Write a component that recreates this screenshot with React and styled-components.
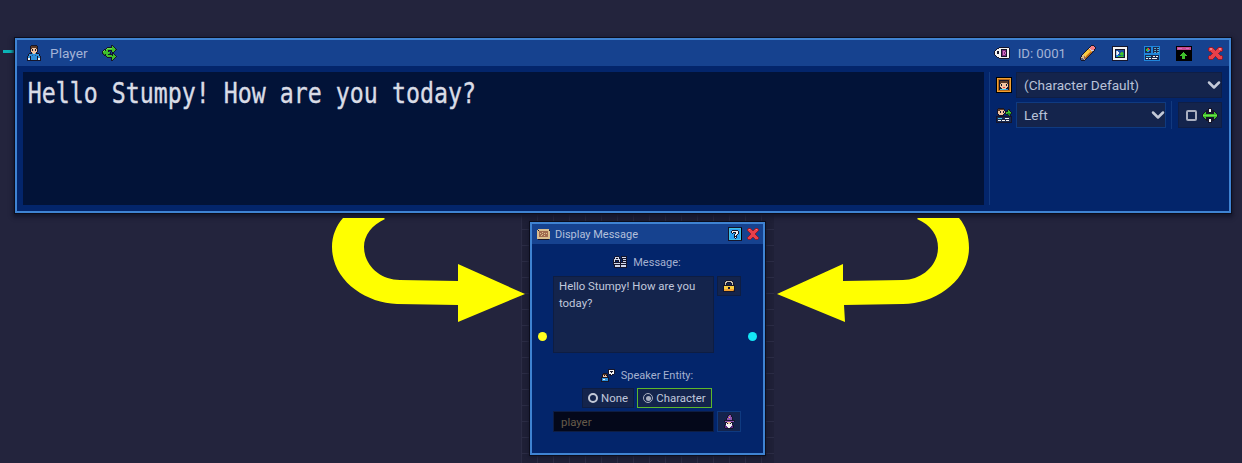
import React from 'react';
import styled, { createGlobalStyle } from 'styled-components';
import { ChevronDown } from 'lucide-react';

const GlobalStyle = createGlobalStyle`
  html, body {
    margin: 0;
    height: 100%;
    background: #23243d;
    overflow: hidden;
  }
  #root {
    height: 463px;
  }
`;

const Page = styled.div`
  position: relative;
  width: 1242px;
  height: 463px;
  padding: 38px 0 0 15px;
  box-sizing: border-box;
  background: #23243d;
  font-family: Roboto, sans-serif;
  overflow: hidden;
`;

const Wire = styled.div`
  position: absolute;
  left: 3px;
  top: 50px;
  width: 12px;
  height: 3px;
  background: #0bb4b8;
`;

const Panel = styled.section`
  position: relative;
  z-index: 1;
  width: 1216px;
  height: 175px;
  box-sizing: border-box;
  border: 2px solid #3f83d2;
  background: #03256b;
  box-shadow: 0 0 0 1px #0c0d1c, 0 2px 4px 2px #14152a;
  display: flex;
  flex-direction: column;
`;

const TitleBar = styled.header`
  height: 26px;
  flex: none;
  display: flex;
  align-items: center;
  background: #16428f;
  padding: 0 6px 0 10px;
  color: #a3b3d6;
  font-size: 13.7px;
`;

const TitleName = styled.span`
  margin: 0 14px 0 9px;
`;

const Spacer = styled.div`
  flex: 1;
`;

const IdText = styled.span`
  margin: 0 14px 0 8px;
  font-size: 13.2px;
`;

const ToolRow = styled.div`
  display: flex;
  align-items: center;
  gap: 16px;
`;

const PanelBody = styled.div`
  flex: 1;
  display: flex;
  padding: 6px 7px 6px 6px;
`;

const Preview = styled.div`
  width: 961px;
  height: 133px;
  flex: none;
  background: #021338;
  overflow: hidden;
`;

const PreviewText = styled.div`
  color: #d9dce6;
  font-family: "DejaVu Sans Mono", monospace;
  font-size: 29px;
  line-height: 30px;
  white-space: nowrap;
  transform-origin: 0 0;
  transform: scaleX(0.802);
  padding: 6px 0 0 6px;
  -webkit-text-stroke: 0.4px #d9dce6;
`;

const SideColumn = styled.div`
  flex: 1;
  margin-left: 5px;
  padding-left: 6px;
  border-left: 1px solid #12397f;
  display: flex;
  flex-direction: column;
  gap: 4px;
`;

const SideRow = styled.div`
  display: flex;
  align-items: center;
  height: 26px;
`;

const RowIcon = styled.div`
  width: 20px;
  flex: none;
  display: flex;
`;

const SelectBox = styled.div`
  box-sizing: border-box;
  width: ${(p) => p.$width}px;
  height: 26px;
  display: flex;
  align-items: center;
  justify-content: space-between;
  padding: 0 0 1px 7px;
  background: #14244c;
  border: 1px solid ${(p) => (p.$accent ? '#0f3a80' : '#0f1e45')};
  color: #b9c2d8;
  font-size: 13.6px;

  svg {
    color: #c3c9d8;
    margin-right: -3px;
  }
`;

const RowDivider = styled.div`
  width: 1px;
  height: 28px;
  margin: 0 6px 0 5px;
  background: #12397f;
`;

const ToggleBox = styled.div`
  box-sizing: border-box;
  width: 44px;
  height: 26px;
  display: flex;
  align-items: center;
  justify-content: space-between;
  padding: 0 3px 0 7px;
  background: #14244c;
  border: 1px solid #0f1e45;
`;

const CheckSquare = styled.div`
  width: 7px;
  height: 7px;
  border: 2.5px solid #a9afc0;
  border-radius: 2px;
`;

const NodeWrap = styled.div`
  position: relative;
  z-index: 0;
`;

const Node = styled.section`
  position: relative;
  width: 235px;
  height: 233px;
  box-sizing: border-box;
  margin: 9px 0 0 515px;
  border: 2px solid #3f83d2;
  background: #03256b;
  box-shadow: 0 0 0 1px #0c0d1c, 0 1px 4px 1px #14152a;
  display: flex;
  flex-direction: column;

  &::before {
    content: '';
    position: absolute;
    inset: -11px;
    z-index: -1;
    background-color: #1f2037;
    background-image:
      linear-gradient(#2b2c45 1px, transparent 1px),
      linear-gradient(90deg, #2b2c45 1px, transparent 1px);
    background-size: 16px 16px;
  }
`;

const NodeTitle = styled.header`
  height: 20px;
  flex: none;
  display: flex;
  align-items: center;
  gap: 5px;
  padding: 0 4px 0 5px;
  background: #16428f;
  color: #b4c0dc;
  font-size: 11px;
`;

const NodeBody = styled.div`
  flex: 1;
  display: flex;
  flex-direction: column;
  padding: 11px 22px 0 21px;
`;

const FieldLabel = styled.div`
  height: 14px;
  margin-top: ${(p) => p.$top}px;
  display: flex;
  align-items: center;
  justify-content: center;
  gap: 6px;
  color: #a5b1d0;
  font-size: 11px;
`;

const FieldRow = styled.div`
  display: flex;
  align-items: flex-start;
  gap: 3px;
  margin-top: ${(p) => p.$top}px;
`;

const MessageBox = styled.div`
  box-sizing: border-box;
  width: 161px;
  height: 77px;
  padding: 1px 5px;
  background: #14244c;
  border: 1px solid #0e1d42;
  color: #c0c8dc;
  font-size: 11.4px;
  line-height: 17px;
`;

const SquareButton = styled.div`
  box-sizing: border-box;
  width: 24px;
  height: ${(p) => p.$height}px;
  display: flex;
  align-items: center;
  justify-content: center;
  background: #14244c;
  border: 1px solid ${(p) => (p.$accent ? '#0f3a80' : '#0e1d42')};
`;

const RadioRow = styled.div`
  display: flex;
  justify-content: center;
  gap: 3px;
  margin-top: 6px;
`;

const RadioButton = styled.div`
  box-sizing: border-box;
  width: ${(p) => p.$width}px;
  height: 20px;
  display: flex;
  align-items: center;
  justify-content: center;
  gap: 3px;
  background: #14244c;
  border: 1px solid ${(p) => (p.$selected ? '#5cb82c' : '#0e1d42')};
  color: #c0c8dc;
  font-size: 11.4px;
`;

const RadioDot = styled.span`
  box-sizing: border-box;
  width: 10px;
  height: 10px;
  border-radius: 50%;
  border: ${(p) => (p.$on ? '1.5px solid #a9afc0' : '2px solid #c3c9d8')};
  display: flex;
  align-items: center;
  justify-content: center;

  &::after {
    content: '';
    width: 5px;
    height: 5px;
    border-radius: 50%;
    background: ${(p) => (p.$on ? '#a9afc0' : 'transparent')};
  }
`;

const EntityInput = styled.div`
  box-sizing: border-box;
  width: 161px;
  height: 21px;
  padding: 0 7px;
  display: flex;
  align-items: center;
  background: #04081a;
  border: 1px solid #0e1d42;
  color: #665b4a;
  font-size: 11.4px;
`;

const Pin = styled.span`
  position: absolute;
  top: 108px;
  ${(p) => (p.$side === 'left' ? 'left: 6px;' : 'right: 6px;')}
  width: 9px;
  height: 9px;
  border-radius: 50%;
  background: ${(p) => p.$color};
`;

const ArrowLayer = styled.svg`
  position: absolute;
  left: 0;
  top: 0;
  z-index: 2;
  pointer-events: none;
`;

const SpriteSvg = styled.svg`
  display: block;
  flex: none;
  shape-rendering: crispEdges;
`;

const COLORS = {
  k: '#15152a', K: '#000000', h: '#5a3a28', f: '#f2c4a0', b: '#2f8fd8', d: '#1a5ea0',
  w: '#ffffff', g: '#3fc02c', G: '#1f8a24', L: '#6fe04a', r: '#e8404a', R: '#f48088',
  D: '#8c1c30', o: '#f2a030', O: '#b86a18', y: '#f8cc40', t: '#d9bd8e', T: '#a06a50',
  p: '#7a2a78', P: '#d070c0', s: '#c8bfae', S: '#60607a', n: '#1a2a50', c: '#42c0e8',
  C: '#1f86dc', m: '#c84a90', e: '#7a8aaa', v: '#5a2d82', V: '#8e54b0', i: '#cfd6ea',
  B: '#2050a0', E: '#f2f2f2', a: '#20a050', l: '#a8c8f0', u: '#2aa0f0',
};

// draws a small pixel icon from rows of palette letters
const Sprite = ({ rows }) => (
  <SpriteSvg width={rows[0].length} height={rows.length} viewBox={`0 0 ${rows[0].length} ${rows.length}`}>
    {rows.flatMap((row, y) =>
      row.split('').map((ch, x) =>
        ch === '.' ? null : <rect key={`${x}-${y}`} x={x} y={y} width="1" height="1" fill={COLORS[ch]} />
      )
    )}
  </SpriteSvg>
);

const PLAYER = [
  '....kkkkkk....',
  '...khhhhhhk...',
  '...khhhhhhk...',
  '...khffffhk...',
  '...kfkffkfk...',
  '...kfkffkfk...',
  '...kffffffk...',
  '....kffffk....',
  '..kkkbffbkkk..',
  '.kbbbbbbbbbbk.',
  '.kbbbdbbdbbbk.',
  'kbbkbbbbbbkbbk',
  'kbbkbbbbbbkbbk',
  'kEEkbbbbbbkEEk',
  'kEEkbbbbbbkEEk',
  'kkkkkkkkkkkkkk',
];

const BRANCH = [
  '.........kk.....',
  '.........kgk....',
  '.....kkkkkggk...',
  '....kLLLLLgggk..',
  '..kkLggggggggGk.',
  '.kLkggkkkkgggk..',
  'kLggggk..kggk...',
  'kgggggggk.kk....',
  'kGgggggGk.kk....',
  '.kGkggkkkkkgk...',
  '..kkggggggkggk..',
  '....kgggggggggk.',
  '.....kkkkkgggk..',
  '.........kggk...',
  '.........kgk....',
  '.........kk.....',
];

const TAG = [
  '.....kkkkkkkkkk.',
  '...kkEEEEEEEEEEk',
  '..kEEEEkkkkkkEEk',
  '.kEEEEEkppppkEEk',
  'kEEkkEEkpPPpkEEk',
  'kEEkkEEkpPpPkEEk',
  'kEEkkEEkpPpPkEEk',
  'kEEEEEEkpPPpkEEk',
  '.kEEEEEkppppkEEk',
  '..kEEEEkkkkkkEEk',
  '...kkEEEEEEEEEEk',
  '.....kkkkkkkkkk.',
];

const PENCIL = [
  '...........kkk..',
  '..........kRRRk.',
  '.........kRRRRRk',
  '........kiRRRRRk',
  '.......kooiRRRk.',
  '......kyyooiisk.',
  '.....kyyyyooSk..',
  '....kyyyyoOOk...',
  '...kyyyyoOOk....',
  '..ktyyyoOOk.....',
  '.kttyyoOOk......',
  '.kttTyOOk.......',
  'ktttTTOk........',
  'kSStTTk.........',
  'kSSStk..........',
  '.kkkk...........',
];

const IMAGE = [
  'kkkkkkkkkkkkkkkk',
  'kEEEEEEEEEEEEEEk',
  'kEEEEEEEEEEEEEEk',
  'kEEkkkkkkkkkkEEk',
  'kEEkBBBBBBBBkEEk',
  'kEEklEBBBBBBkEEk',
  'kEEklEEBBggBkEEk',
  'kEEklEEBgggakEEk',
  'kEEklEBBgggakEEk',
  'kEEkCCCBBaaBkEEk',
  'kEEkCCgggggakEEk',
  'kEEkkkkkkkkkkEEk',
  'kEEEEEEEEEEEEEEk',
  'kEEEEEEEEEEEEEEk',
  'kkkkkkkkkkkkkkkk',
];

const LAYOUT = [
  'CCCCCCCCCCCCCCCC',
  'CnnnnnnCCnnnnnnC',
  'CnngrnnCCnecnecC',
  'CnggrrnCCnnnnnnC',
  'CnggbbnCCnecnecC',
  'CnnbbnnCCnnnnnnC',
  'CnnnnnnCCnecnecC',
  'CCCCCCCCCCCCCCCC',
  'CCCCCCCCCCCCCCCC',
  'CnnnnnnnnnnnnnnC',
  'CncccccnnEEnEEnC',
  'CnnnnnnnnnnnnnnC',
  'CnEEnEEnEEEEEnnC',
  'CnnnnnnnnnnnnnnC',
  'CCCCCCCCCCCCCCCC',
];

const UPLOAD = [
  'KKKKKKKKKKKKKKKK',
  'KmmmmmmmmmmmmmmK',
  'KmPPPPmmmmPPPmmK',
  'KmmmmmmmmmmmmmmK',
  'KKKKKKKKKKKKKKKK',
  'KKKKKKKKKKKKKKKK',
  'KKKKKKKgKKKKKKKK',
  'KKKKKKgggKKKKKKK',
  'KKKKKgggggKKKKKK',
  'KKKKgggggggKKKKK',
  'KKKKKKgggKKKKKKK',
  'KKKKKKgggKKKKKKK',
  'KKKKKKgggKKKKKKK',
  'KKKKKKKKKKKKKKKK',
  'KKKKKKKKKKKKKKKK',
];

const CLOSE = [
  '.DDDD.....DDDD.',
  'DrRRrD...DrRRrD',
  'DrRRrrD.DrrRRrD',
  'DrrrrrrDrrrrrrD',
  '.DDrrrrrrrrrDD.',
  '...DrrrrrrrD...',
  '....DrrrrrD....',
  '...DrrrrrrrD...',
  '.DDrrrrrrrrrDD.',
  'DrrrrrrDrrrrrrD',
  'DrrrrrD.DrrrrrD',
  'DrrrrD...DrrrrD',
  '.DDDD.....DDDD.',
];

const CLOSE_SMALL = [
  '.DDD....DDD.',
  'DrRrD..DrRrD',
  'DrrrrDDrrrrD',
  '.DrrrrrrrrD.',
  '..DrrrrrrD..',
  '...DrrrrD...',
  '...DrrrrD...',
  '..DrrrrrrD..',
  '.DrrrrrrrrD.',
  'DrrrrDDrrrrD',
  'DrrrD..DrrrD',
  '.DDD....DDD.',
];

const PORTRAIT = [
  'KKKKKKKKKKKKKKKK',
  'KooooooooooooooK',
  'KoOOOOOOOOOOOOoK',
  'KoOkkkkkkkkkkOoK',
  'KoOkhhhhhhhhkOoK',
  'KoOkhhhhhhhhkOoK',
  'KoOkhffffffhkOoK',
  'KoOkfkffffkfkOoK',
  'KoOkfkffffkfkOoK',
  'KoOkffffffffkOoK',
  'KoOkkffrrffkkOoK',
  'KoOkkkffffkkkOoK',
  'KoOkccccccbbkOoK',
  'KoOOOOOOOOOOOOoK',
  'KooooooooooooooK',
  'KKKKKKKKKKKKKKKK',
];

const SPEAKER_SIDE = [
  '..kkkkkk........',
  '.khhhhhhk...kk..',
  '.khhffffk..kgk..',
  '.kffkffkfkkkggk.',
  '.kffkffkfkgggggk',
  '.kffffffkkgGGGGk',
  '..kffffk..kkGGk.',
  '..kkkkkk....kGk.',
  'kkkkkkkkkkkkkkkk',
  'knnnnnnnnnnnnnnk',
  'knccccnnnEEEEnnk',
  'knnnnnnnnnnnnnnk',
  'knEEEnEEEnEEEnnk',
  'knnnnnnnnnnnnnnk',
  'kkkkkkkkkkkkkkkk',
];

const RESIZE = [
  '......kkkk......',
  '......kEEk......',
  '....kkkEEkkk....',
  '...kkkkEEkkkk...',
  '..kgkkkkkkkkgk..',
  '.kggkkkkkkkkggk.',
  'kggggggggggggggk',
  'kLLLLLLLLLLLLLLk',
  'kggggggggggggggk',
  '.kggkkkkkkkkggk.',
  '..kgkkkkkkkkgk..',
  '...kkkkEEkkkk...',
  '....kkkEEkkk....',
  '......kEEk......',
  '......kkkk......',
];

const MAP = [
  '.ttttttttttt.',
  'tkttttttttttk',
  'ttTTTTTTTTTtt',
  'ttTTTtTTTTTtt',
  'ttTtTTTtTtTtt',
  'ttTTTtTTTTTtt',
  'ttTTtTTtTTTtt',
  'ttTTTTTTTTTtt',
  'ttttttttttttt',
  'ttttttttttttt',
  '.kkkkkkkkkkk.',
];

const HELP = [
  'kkkkkkkkkkkkkk',
  'kccccccccccccK',
  'kcuuuuuuuuuucK',
  'kcuukkkkkkuucK',
  'kcukEEEEEEkucK',
  'kcukEkkkEEkucK',
  'kcuukuukEEkucK',
  'kcuuuukEEkuucK',
  'kcuuuukEkuuucK',
  'kcuuuukkkuuucK',
  'kcuuuukEkuuucK',
  'kcuuuuukuuuucK',
  'kccccccccccccK',
  'kkkkkkkkkkkkkk',
];

const MESSAGE_ICON = [
  '..kkkk..kkkkkk',
  '.kiiiik.kiiiik',
  '.kikkik.kkkkkk',
  'kiiiiiik.kiiik',
  'kikkkkik.kkkkk',
  'kik..kik.kiiik',
  'kkkkkkkkkkkkkk',
  'kiiiiiikiiiiik',
  'kkkkkkkkkkkkkk',
  '.kiiiiikiiiiik',
  '.kiiiiikiiiiik',
  '.kkkkkkkkkkkkk',
];

const LOCK = [
  '...kkkkkk...',
  '..kssssssk..',
  '.ksskkkkssk.',
  '.ksk....ksk.',
  '.ksk....ksk.',
  'kkkkkkkkkkkk',
  'kyyyyyyyyyyk',
  'kyyyykkyyyyk',
  'kyyyykkyyyyk',
  'kooooooooook',
  'koooooooooOk',
  'kkkkkkkkkkkk',
];

const SPEAKER = [
  '.......kkkkkkk',
  '.......kEEEEEk',
  '.......kEkkkEk',
  '.......kEEkEEk',
  '..kkkk.kEEEEEk',
  '.khhhhk.kkEkk.',
  '.kfkfkk..kk...',
  '.kffffk.......',
  'kkkkkkkk......',
  'kbbbbbbk......',
  'kbEEbbbk......',
  'kbbbbbbk......',
  'kkkkkkkk......',
];

const WIZARD = [
  '......kk.....',
  '.....kVVk....',
  '....kVVVk....',
  '....kVyVVk...',
  '...kVVVVVk...',
  '...kVVVVVk...',
  '.kkkkkkkkkkk.',
  '.kVVVVVVVVVk.',
  '..kkffffkk...',
  '..kEkffkEk...',
  '..kEEEEEEk...',
  '.kvEEEEEEvk..',
  '.kvvEEEEvvk..',
  '.kvvvEEvvvk..',
  '..kkkkkkkk...',
];

const Arrows = () => (
  <ArrowLayer width="1242" height="463" viewBox="0 0 1242 463">
    <path
      fill="#ffff00"
      d="M343 218 C336 226 332 236 332 247 C332 280 365 303 397 304 L458 305 L458 322 L525 294 L458 264 L458 281 L400 280 C380 280 364 265 364 247 C364 235 372 225 385 219 L384 218 Z"
    />
    <path
      fill="#ffff00"
      d="M959 218 C966 226 969 236 969 248 C969 280 936 304 903 304 L844 305 L845 322 L777 294 L843 264 L843 281 L903 280 C922 280 938 265 938 248 C938 235 931 225 917 219 L918 218 Z"
    />
  </ArrowLayer>
);

export default function App() {
  return (
    <Page>
      <GlobalStyle />
      <Wire />
      <Panel>
        <TitleBar>
          <Sprite rows={PLAYER} />
          <TitleName>Player</TitleName>
          <Sprite rows={BRANCH} />
          <Spacer />
          <Sprite rows={TAG} />
          <IdText>ID: 0001</IdText>
          <ToolRow>
            <Sprite rows={PENCIL} />
            <Sprite rows={IMAGE} />
            <Sprite rows={LAYOUT} />
            <Sprite rows={UPLOAD} />
            <Sprite rows={CLOSE} />
          </ToolRow>
        </TitleBar>
        <PanelBody>
          <Preview>
            <PreviewText>Hello Stumpy! How are you today?</PreviewText>
          </Preview>
          <SideColumn>
            <SideRow>
              <RowIcon>
                <Sprite rows={PORTRAIT} />
              </RowIcon>
              <SelectBox $width={206}>
                (Character Default)
                <ChevronDown size={20} strokeWidth={3} />
              </SelectBox>
            </SideRow>
            <SideRow>
              <RowIcon>
                <Sprite rows={SPEAKER_SIDE} />
              </RowIcon>
              <SelectBox $width={150} $accent>
                Left
                <ChevronDown size={20} strokeWidth={3} />
              </SelectBox>
              <RowDivider />
              <ToggleBox>
                <CheckSquare />
                <Sprite rows={RESIZE} />
              </ToggleBox>
            </SideRow>
          </SideColumn>
        </PanelBody>
      </Panel>

      <NodeWrap>
        <Node>
          <NodeTitle>
            <Sprite rows={MAP} />
            Display Message
            <Spacer />
            <Sprite rows={HELP} />
            <Sprite rows={CLOSE_SMALL} />
          </NodeTitle>
          <NodeBody>
            <FieldLabel $top={0}>
              <Sprite rows={MESSAGE_ICON} />
              Message:
            </FieldLabel>
            <FieldRow $top={7}>
              <MessageBox>Hello Stumpy! How are you today?</MessageBox>
              <SquareButton $height={20}>
                <Sprite rows={LOCK} />
              </SquareButton>
            </FieldRow>
            <FieldLabel $top={15}>
              <Sprite rows={SPEAKER} />
              Speaker Entity:
            </FieldLabel>
            <RadioRow>
              <RadioButton $width={52}>
                <RadioDot />
                None
              </RadioButton>
              <RadioButton $width={75} $selected>
                <RadioDot $on />
                Character
              </RadioButton>
            </RadioRow>
            <FieldRow $top={3}>
              <EntityInput>player</EntityInput>
              <SquareButton $height={21} $accent>
                <Sprite rows={WIZARD} />
              </SquareButton>
            </FieldRow>
          </NodeBody>
          <Pin $side="left" $color="#ffff1e" />
          <Pin $side="right" $color="#14e6f5" />
        </Node>
      </NodeWrap>
      <Arrows />
    </Page>
  );
}
